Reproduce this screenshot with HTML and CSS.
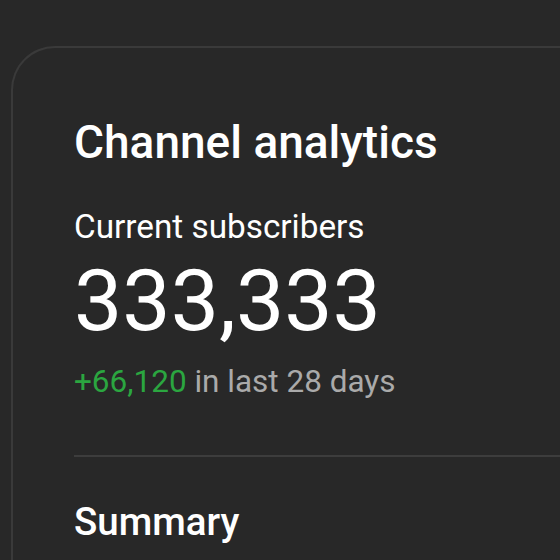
FILE: index.html
```html
<!DOCTYPE html>
<html lang="en">
<head>
    <meta charset="UTF-8" />
    <meta name="viewport" content="width=device-width, initial-scale=1.0" />
    <title>Channel analytics</title>
    <link rel="stylesheet" href="styles.css">
</head>
<body>
    <!-- Analytics card -->
    <div class="card">
        <h1>Channel analytics</h1>
        <div class="subs">
            <div class="subs-label">Current subscribers</div>
            <div class="subs-count">333,333</div>
            <div class="subs-change"><span class="up">+66,120</span> in last 28 days</div>
        </div>
        <hr class="divider" />
        <h2>Summary</h2>
    </div>
</body>
</html>
```
FILE: styles.css
```css
/* base */
html, body {
    margin: 0;
    padding: 0;
    background: #282828;
    font-family: Roboto, "Liberation Sans", sans-serif;
    color: #fff;
    overflow: hidden;
}
body {
    padding: 46px 0 0 11px;
    height: 560px;
    box-sizing: border-box;
}
.card {
    border: 2px solid #3a3a3a;
    border-right: none;
    border-bottom: none;
    border-top-left-radius: 44px;
    padding: 66px 0 0 61px;
    height: 100%;
    box-sizing: border-box;
}
h1 {
    margin: 0;
    font-size: 46px;
    font-weight: 500;
    line-height: 56px;
}
.subs { margin-top: 37px; }
.subs-label {
    font-size: 33.3px;
    line-height: 40px;
}
.subs-count {
    margin-top: 6px;
    font-size: 86px;
    line-height: 96px;
}
.subs-change {
    margin-top: 13px;
    font-size: 31.5px;
    line-height: 40px;
    color: #aaa;
}
.subs-change .up { color: #2ba640; }
.divider {
    border: none;
    border-top: 2px solid #3d3d3d;
    margin: 53px 0 41px;
}
h2 {
    margin: 0;
    font-size: 38.5px;
    font-weight: 500;
    line-height: 48px;
}
```
